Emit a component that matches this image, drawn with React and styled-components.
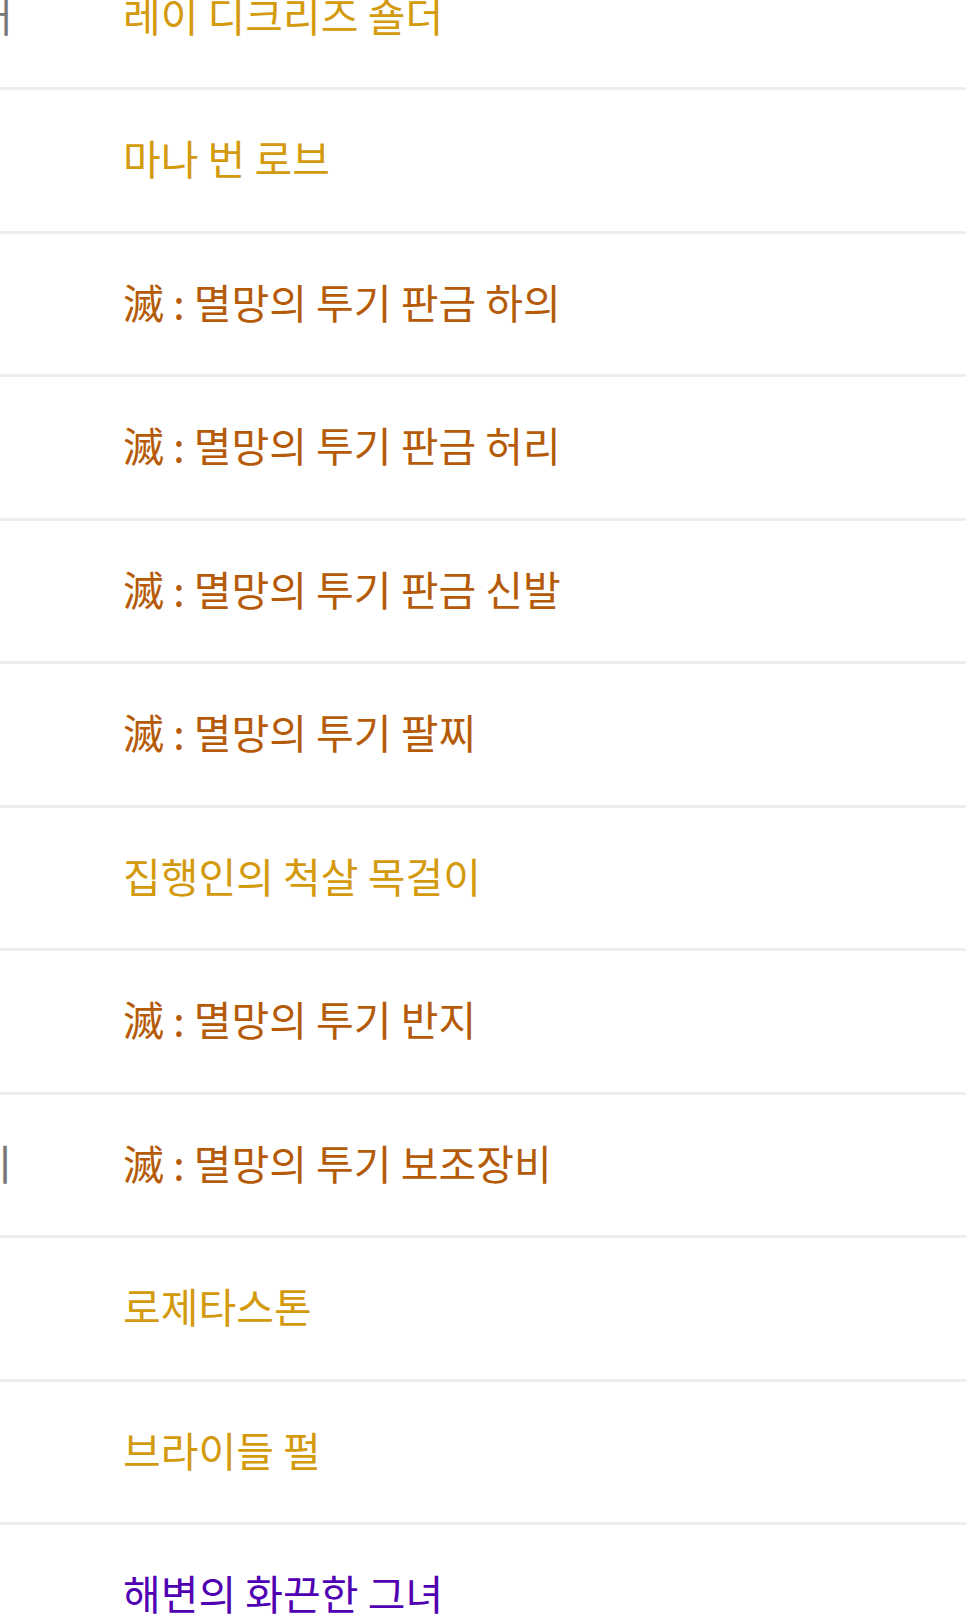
import styled, { createGlobalStyle } from "styled-components";

const GlobalStyle = createGlobalStyle`
    html, body {
        margin: 0;
        padding: 0;
        background: #ffffff;
        overflow: hidden;
    }

    body {
        font-family: "Noto Sans CJK KR", "Noto Sans", sans-serif;
    }
`;

// 아이템 등급별 색상
const gradeColors = {
    legendary: "#d49a0e",
    relic: "#b55b08",
    epic: "#5000b2",
};

const items = [
    { lead: "1개", name: "레이 디크리즈 숄더", grade: "legendary" },
    { lead: "", name: "마나 번 로브", grade: "legendary" },
    { lead: "", name: "滅 : 멸망의 투기 판금 하의", grade: "relic" },
    { lead: "", name: "滅 : 멸망의 투기 판금 허리", grade: "relic" },
    { lead: "", name: "滅 : 멸망의 투기 판금 신발", grade: "relic" },
    { lead: "", name: "滅 : 멸망의 투기 팔찌", grade: "relic" },
    { lead: "", name: "집행인의 척살 목걸이", grade: "legendary" },
    { lead: "", name: "滅 : 멸망의 투기 반지", grade: "relic" },
    { lead: "보조기", name: "滅 : 멸망의 투기 보조장비", grade: "relic" },
    { lead: "", name: "로제타스톤", grade: "legendary" },
    { lead: "", name: "브라이들 펄", grade: "legendary" },
    { lead: "", name: "해변의 화끈한 그녀", grade: "epic" },
];

export default function App() {
    return (
        <>
            <GlobalStyle />
            <Page>
                <ItemList>
                    {items.map((item, i) => (
                        <ItemRow key={i}>
                            <LeadCell>{item.lead}</LeadCell>
                            <NameCell $color={gradeColors[item.grade]}>{item.name}</NameCell>
                        </ItemRow>
                    ))}
                </ItemList>
            </Page>
        </>
    );
}

const Page = styled.div`
    width: 966px;
    height: 1617px;
    overflow: hidden;
`;

const ItemList = styled.div`
    display: flex;
    flex-direction: column;

    margin-top: -53.5px;
`;

const ItemRow = styled.div`
    box-sizing: border-box;
    flex: 0 0 143.5px;
    padding-bottom: 6px;

    display: flex;
    align-items: center;

    border-bottom: 3px solid #eeeeee;
`;

const LeadCell = styled.div`
    flex: 0 0 120px;
    margin-left: -108px;

    text-align: right;
    white-space: nowrap;

    font-size: 41px;
    color: #777777;
`;

const NameCell = styled.div`
    padding-left: 111px;

    white-space: nowrap;

    font-size: 41px;
    color: ${props => props.$color};
`;
